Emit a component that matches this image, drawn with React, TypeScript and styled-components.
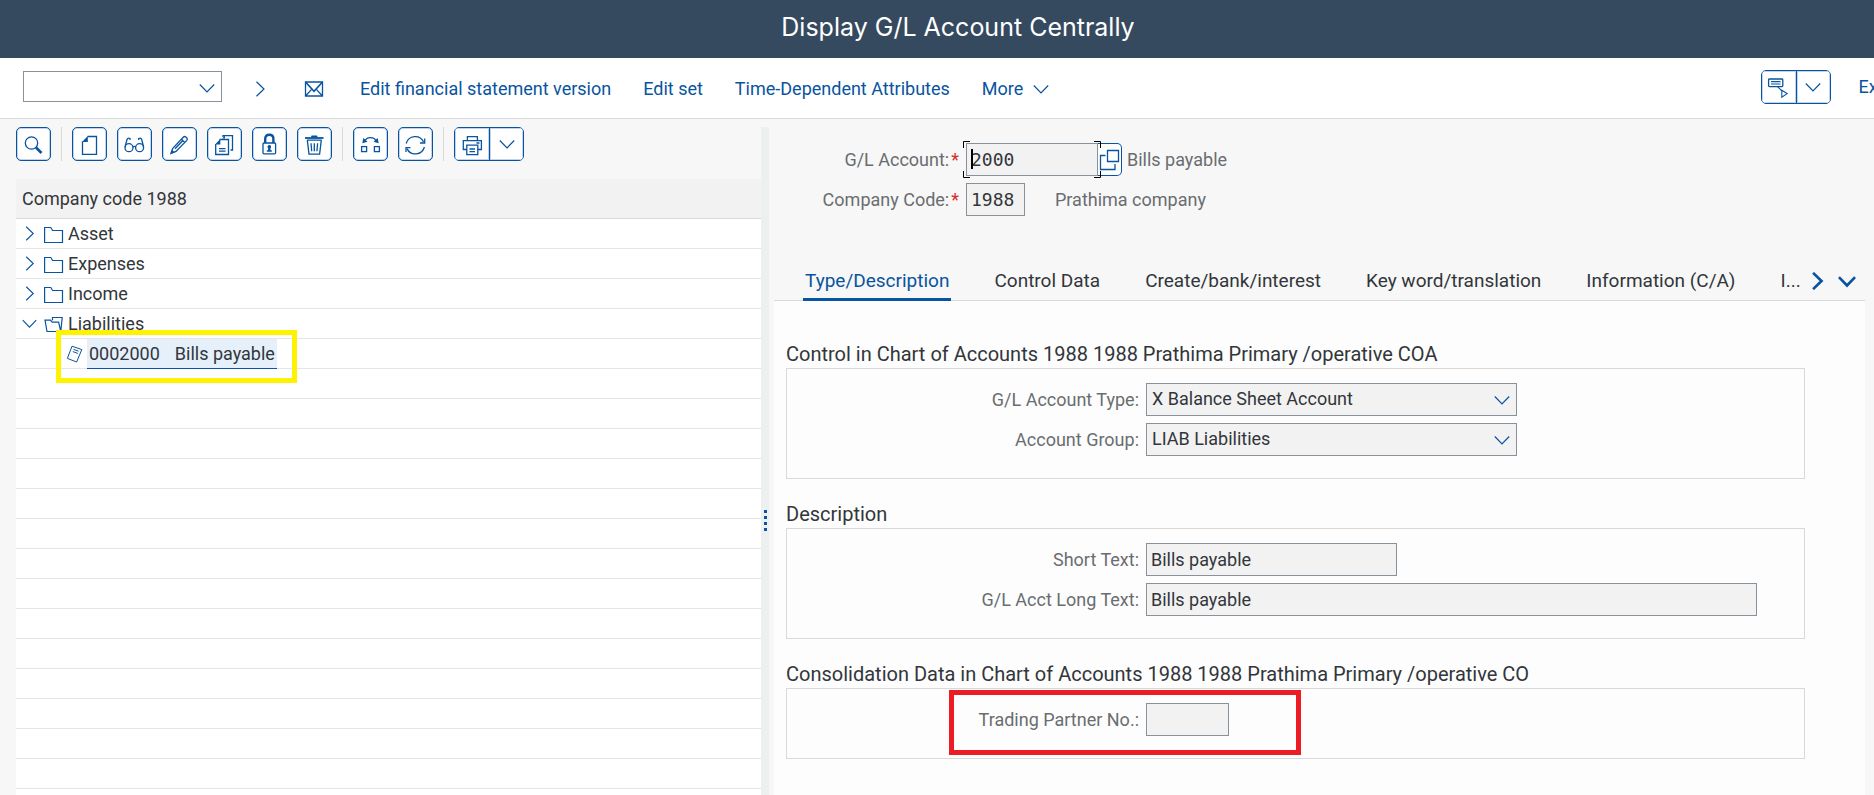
import React from 'react';
import styled, { createGlobalStyle } from 'styled-components';

const color = {
  shell: '#354a5f',
  page: '#f7f7f7',
  link: '#0854a0',
  text: '#32363a',
  label: '#6a6d70',
  line: '#d9d9d9',
  rowLine: '#e5e5e5',
  field: '#f2f2f2',
  fieldBorder: '#89919a',
};

const GlobalStyle = createGlobalStyle`
  *, *::before, *::after { box-sizing: border-box; }
  body {
    margin: 0;
    background: ${color.page};
    color: ${color.text};
    font: 18px/24px Roboto, "Liberation Sans", sans-serif;
  }
  button, input, select { font: inherit; color: inherit; margin: 0; }
  button { padding: 0; border: 0; background: none; cursor: pointer; }
  svg { display: block; flex: none; }
`;

/* ---------- page frame ---------- */

const Page = styled.div`
  display: flex;
  flex-direction: column;
  height: 100vh;
  overflow: hidden;
`;

const ShellHeader = styled.header`
  display: flex;
  justify-content: center;
  height: 58px;
  padding: 0 0 4px 42px;
  align-items: center;
  background: ${color.shell};
`;

const Title = styled.h1`
  margin: 0;
  color: #fff;
  font: 400 25px/32px Inter, "Liberation Sans", sans-serif;
`;

const ActionBar = styled.div`
  display: flex;
  align-items: center;
  height: 61px;
  padding: 0 0 3px 23px;
  overflow: hidden;
  background: #fff;
  border-bottom: 1px solid ${color.line};
`;

const Actions = styled.nav`
  display: flex;
  align-items: center;
  gap: 32px;
  padding-top: 4px;
  color: ${color.link};
`;

const IconActions = styled.div`
  display: flex;
  align-items: center;
  gap: 36px;
  margin: 0 36px 0 30px;
  padding-top: 4px;
`;

const ActionButton = styled.button`
  display: flex;
  align-items: center;
  gap: 10px;
  color: ${color.link};
  white-space: nowrap;
`;

const BarEnd = styled.div`
  display: flex;
  align-items: center;
  gap: 28px;
  margin: 0 -14px 0 auto;
`;

const Body = styled.main`
  display: flex;
  flex: 1;
  min-height: 0;
  padding-top: 8px;
`;

/* ---------- buttons ---------- */

const ToolGroup = styled.div`
  display: flex;
  height: 34px;
  background: #fff;
  border: 1px solid ${color.link};
  border-radius: 5px;
  overflow: hidden;
`;

const ToolButton = styled.button`
  display: flex;
  align-items: center;
  justify-content: center;
  width: 35px;
  height: 34px;
  color: ${color.link};
  background: #fff;
  border: 1px solid ${color.link};
  border-radius: 5px;
  box-shadow: inset 0 0 0 1px rgba(8, 84, 160, 0.25);

  ${ToolGroup} & {
    width: 34px;
    height: 32px;
    border: 0;
    border-radius: 0;
  }
  ${ToolGroup} & + & {
    border-left: 1px solid ${color.link};
  }
`;

/* ---------- tree ---------- */

const TreePane = styled.section`
  display: flex;
  flex-direction: column;
  flex: 0 1 745px;
  margin-left: 16px;
  min-width: 0;
`;

const TreeTools = styled.div`
  display: flex;
  gap: 10px;
  margin-bottom: 18px;
`;

const ToolDivider = styled.span`
  width: 1px;
  height: 34px;
  background: ${color.line};
`;

const TreeHeading = styled.h2`
  flex: none;
  margin: 0;
  height: 40px;
  padding-left: 6px;
  font-size: 18px;
  font-weight: 400;
  line-height: 39px;
  background: ${color.field};
  border-bottom: 1px solid ${color.line};
`;

const Tree = styled.ul`
  flex: 1;
  min-height: 0;
  margin: 0;
  padding: 0;
  list-style: none;
  background: #fff;
`;

const TreeRow = styled.li<{ $level?: number }>`
  position: relative;
  display: flex;
  align-items: center;
  height: 30px;
  padding-left: ${(p) => (p.$level ? 50 : 6)}px;
  color: ${color.link};
  border-bottom: 1px solid ${color.rowLine};
`;

const TreeToggle = styled.button`
  margin-right: 7px;
  color: ${color.link};
`;

const TreeLabel = styled.span`
  margin-left: 4px;
  color: ${color.text};
`;

const SelectedItem = styled.button`
  display: flex;
  align-items: center;
  align-self: flex-start;
  gap: 15px;
  height: 30px;
  margin-left: 3px;
  padding: 0 2px;
  color: ${color.text};
  background: #e5f0fa;
  border-bottom: 1px solid ${color.link};
`;

const YellowMark = styled.div`
  position: absolute;
  top: -9px;
  left: 40px;
  width: 241px;
  height: 53px;
  border: 5px solid #fff200;
  pointer-events: none;
`;

const Splitter = styled.div`
  display: flex;
  flex-direction: column;
  align-items: center;
  gap: 3px;
  flex: none;
  width: 8px;
  padding-top: 383px;
  background: #edeff1;
`;

const Grip = styled.i`
  width: 3px;
  height: 3px;
  background: ${color.link};
`;

/* ---------- detail pane ---------- */

const Detail = styled.section`
  display: flex;
  flex-direction: column;
  flex: 1;
  min-width: 0;
  padding: 16px 9px 0 5px;
`;

const KeyFields = styled.div`
  display: grid;
  gap: 7px;
  margin-bottom: 46px;
`;

const FormRow = styled.div<{ $labelWidth: number }>`
  display: grid;
  grid-template-columns: ${(p) => p.$labelWidth}px 1fr;
  align-items: center;
  column-gap: 7px;
  height: 33px;
`;

const Label = styled.label`
  color: ${color.label};
  text-align: right;
  white-space: nowrap;
`;

const Required = styled.span`
  margin-left: 2px;
  color: #d92b2b;
`;

const FieldGroup = styled.div`
  display: flex;
  align-items: center;
`;

const TextField = styled.input<{ $width: number; $mono?: boolean }>`
  width: ${(p) => p.$width}px;
  max-width: 100%;
  height: 33px;
  padding: 0 4px;
  background: ${color.field};
  border: 1px solid ${color.fieldBorder};
  border-radius: 0;
  outline: 0;
  ${(p) => p.$mono && 'font-family: "DejaVu Sans Mono", "Liberation Mono", monospace;'}
`;

const FocusFrame = styled.div`
  position: relative;
  height: 33px;
`;

const FocusCorners = styled.svg`
  position: absolute;
  z-index: 1;
  top: -2px;
  left: -3px;
  pointer-events: none;
`;

const ValueHelp = styled.button`
  height: 33px;
  width: 24px;
  color: ${color.link};
  background: #fff;
  border: 1px solid ${color.link};
  border-left: 0;
  border-radius: 0 5px 5px 0;
`;

const FieldNote = styled.span<{ $gap: number }>`
  margin-left: ${(p) => p.$gap}px;
  color: ${color.label};
`;

const SelectBox = styled.div<{ $width: number; $height: number }>`
  position: relative;
  width: ${(p) => p.$width}px;
  height: ${(p) => p.$height}px;
  color: ${color.link};

  svg {
    position: absolute;
    top: 9px;
    right: 7px;
    pointer-events: none;
  }
`;

const Select = styled.select<{ $plain?: boolean }>`
  appearance: none;
  width: 100%;
  height: 100%;
  padding: 0 28px 2px 5px;
  color: ${color.text};
  background: ${(p) => (p.$plain ? '#fff' : color.field)};
  border: 1px solid ${color.fieldBorder};
  border-radius: 0;
`;

const TabBar = styled.div`
  display: flex;
  height: 39px;
  flex: none;
  padding: 0 9px 0 29px;
  border-bottom: 1px solid ${color.line};
`;

const TabList = styled.div`
  display: flex;
  gap: 41px;
  flex: 1;
`;

const Tab = styled.button<{ $active?: boolean }>`
  height: 39px;
  padding: 0 2px;
  font-size: 19px;
  line-height: 38px;
  white-space: nowrap;
  color: ${(p) => (p.$active ? color.link : color.text)};
  border-bottom: 3px solid ${(p) => (p.$active ? color.link : 'transparent')};
`;

const TabNav = styled.div`
  display: flex;
  gap: 12px;
  color: ${color.link};
  height: 38px;
`;

const TabPanel = styled.div`
  flex: 1;
  min-height: 0;
  padding: 39px 60px 0 12px;
  background: #fdfdfd;
`;

const Section = styled.section`
  margin-bottom: 21px;
`;

const SectionTitle = styled.h3`
  margin: 0;
  font-size: 20px;
  font-weight: 400;
  line-height: 28px;
  white-space: nowrap;
`;

const SectionBox = styled.div`
  position: relative;
  display: grid;
  gap: 7px;
  padding: 14px 0 22px;
  border: 1px solid ${color.line};
`;

const RedMark = styled.div`
  position: absolute;
  top: 1px;
  left: 162px;
  width: 352px;
  height: 65px;
  border: 5px solid #ed1c24;
  pointer-events: none;
`;

/* ---------- icons ---------- */

type ArrowProps = { direction?: 'down' | 'right'; size?: number; weight?: number };

function Arrow({ direction = 'down', size = 16, weight = 1 }: ArrowProps) {
  const d = direction === 'down' ? 'M0.8 4.5 L8 12 L15.2 4.5' : 'M4.5 0.8 L12 8 L4.5 15.2';
  return (
    <svg width={size} height={size} viewBox="0 0 16 16" fill="none" stroke="currentColor" strokeWidth={weight * 1.2}>
      <path d={d} />
    </svg>
  );
}

function ToolIcon({ children }: { children: React.ReactNode }) {
  return (
    <svg width="33" height="32" viewBox="1 1 33 32" fill="none" stroke="currentColor" strokeWidth="1.3">
      {children}
    </svg>
  );
}

const icons = {
  search: (
    <ToolIcon>
      <circle cx="15.5" cy="16" r="6.2" />
      <path d="M20 20.5 L25.5 26" strokeWidth="2.6" />
    </ToolIcon>
  ),
  create: (
    <ToolIcon>
      <path d="M15.5 9.5 H24.5 V27.3 H10.5 V14.5" />
      <path d="M10 15 L15.8 9 V15 Z" fill="currentColor" stroke="none" />
    </ToolIcon>
  ),
  display: (
    <ToolIcon>
      <circle cx="12" cy="20.7" r="4" />
      <circle cx="22.6" cy="20.7" r="4" />
      <path d="M15.8 20 Q17.3 18.8 18.8 20 M8 20 L10 12.5 Q10.7 10.6 13 11.5 V13 M26.6 20 L24.7 12.5 Q24 10.6 21.7 11.5 V13" />
    </ToolIcon>
  ),
  edit: (
    <ToolIcon>
      <path d="M9 26.3 L10.8 21.3 L21.5 10 Q22.5 9 23.8 10 L25 11.2 Q25.8 12.3 24.8 13.4 L14 24.4 Z M19.5 12.2 L22.7 15.5 M13 21.8 L20.5 14" />
      <path d="M8.7 26.8 L10 22.7 L12.8 25.4 Z" fill="currentColor" stroke="none" />
    </ToolIcon>
  ),
  copy: (
    <ToolIcon>
      <path d="M12.5 12.5 H21.5 V27.5 H8.7 V17" />
      <path d="M8 17.5 L13.3 12 V17.5 Z" fill="currentColor" stroke="none" />
      <path d="M16 10 V8.6 H25.5 V23 H23.5 M12 21.6 H18.5 M12 24.2 H18.5" />
      <path d="M15.3 11.5 L18 8.5 V11.5 Z" fill="currentColor" stroke="none" />
    </ToolIcon>
  ),
  lock: (
    <ToolIcon>
      <path d="M13.2 16 V12 Q13.2 7.8 17.3 7.8 Q21.4 7.8 21.4 12 V16" strokeWidth="2.4" />
      <rect x="11" y="16" width="12.6" height="10.8" rx="1" />
      <path d="M17.3 18 a1.9 1.9 0 0 1 1.2 3.3 V23.3 H19.8 V24.8 H14.8 V23.3 H16.1 V21.3 A1.9 1.9 0 0 1 17.3 18 Z" fill="currentColor" stroke="none" />
    </ToolIcon>
  ),
  remove: (
    <ToolIcon>
      <path d="M8 11 H26.5" strokeWidth="1.8" />
      <path d="M13.8 10.5 L14.6 8.5 H20 L20.8 10.5 Z" fill="currentColor" stroke="none" />
      <path d="M10 13.2 H24.6 M10.3 13.2 L12 27.2 H22.6 L24.3 13.2 M14 16.3 L14.7 24.3 M17.3 16.3 V24.3 M20.6 16.3 L19.9 24.3" />
    </ToolIcon>
  ),
  swap: (
    <ToolIcon>
      <rect x="8.6" y="19.6" width="5" height="5" />
      <rect x="21.4" y="19.6" width="5" height="5" />
      <path d="M12 14 Q13 10.6 17.5 10.6 Q22 10.6 23 14" />
      <path d="M9.3 16.2 L10.3 10.9 L14.5 14.8 Z M25.7 16.2 L24.7 10.9 L20.5 14.8 Z" fill="currentColor" stroke="none" />
    </ToolIcon>
  ),
  refresh: (
    <ToolIcon>
      <path d="M8.2 16.5 A9.3 9.3 0 0 1 25.6 15 M26.4 20 A9.3 9.3 0 0 1 9 21.6" />
      <path d="M26.7 11.5 V16 H22 M8 25 V20.6 H12.5" />
    </ToolIcon>
  ),
  print: (
    <ToolIcon>
      <path d="M12.4 13.6 V9.6 H22.4 V13.6 M11.8 22.5 H8.3 V13.6 H26.4 V22.5 H22.8" />
      <path d="M11.8 18.2 H22.8 V27.6 H11.8 Z M14.5 22 H20 M14.5 24.6 H20 M21.5 16 H24.5" />
    </ToolIcon>
  ),
  guide: (
    <ToolIcon>
      <rect x="7.6" y="9" width="14.2" height="7.6" rx="0.8" />
      <path d="M10 11.6 H19.5 M10 14 H19.5 M16.5 16.6 L20.8 20.8 M20.8 20.2 L26.2 23.6 L20.8 27.3 Z" strokeWidth="1.1" />
    </ToolIcon>
  ),
};

function MailIcon() {
  return (
    <svg width="20" height="16" viewBox="0 0 20 16" fill="none" stroke="currentColor" strokeWidth="1.3">
      <path d="M1.5 1 H18.5 V15 H1.5 Z M1.5 15 L7.6 8.4 M18.5 15 L12.4 8.4" />
      <path d="M1.5 1 L10 10.4 L18.5 1" strokeWidth="1.6" />
    </svg>
  );
}

function FolderIcon({ open }: { open?: boolean }) {
  return (
    <svg width="20" height="18" viewBox="0 0 20 18" fill="none" stroke="currentColor" strokeWidth="1.2">
      {open ? (
        <path d="M8.5 5.2 V2.5 H18.2 L16.8 16.5 H3 L1 5.2 H6.5 L8.2 7.2 H14.6 L16.8 16.5" />
      ) : (
        <path d="M0.6 17.5 V2.5 H6.8 L8.6 5.5 H18.5 V17.5 Z" />
      )}
    </svg>
  );
}

function AccountIcon() {
  return (
    <svg width="18" height="18" viewBox="0 0 18 18" fill="none" stroke="currentColor" strokeWidth="1">
      <path d="M6 1.2 L15.8 4.6 L10.6 17 L1.4 13.4 Z M7.6 4.4 L12.6 6.2 M6.8 6.6 L11.8 8.4" />
    </svg>
  );
}

function CopyWindowsIcon() {
  return (
    <svg width="24" height="31" viewBox="0 0 24 31" fill="none" stroke="currentColor" strokeWidth="1.3">
      <path d="M9.5 6.5 H20.5 V17.5 H9.5 Z M7.5 11.5 H2.5 V25.5 H17 V20" />
    </svg>
  );
}

/* ---------- data ---------- */

const tools: [keyof typeof icons, string][][] = [
  [['search', 'Find']],
  [
    ['create', 'Create'],
    ['display', 'Display'],
    ['edit', 'Change'],
    ['copy', 'Create with template'],
    ['lock', 'Block'],
    ['remove', 'Mark for deletion'],
  ],
  [
    ['swap', 'Switch hierarchy'],
    ['refresh', 'Refresh'],
  ],
];

const folders = [
  { name: 'Asset' },
  { name: 'Expenses' },
  { name: 'Income' },
  { name: 'Liabilities', open: true },
];

const tabs = ['Type/Description', 'Control Data', 'Create/bank/interest', 'Key word/translation', 'Information (C/A)', 'I...'];

const blankRows = Array.from({ length: 15 }, (_, i) => i);

function SelectField({ id, value }: { id: string; value: string }) {
  return (
    <SelectBox $width={371} $height={33}>
      <Select id={id} defaultValue={value}>
        <option>{value}</option>
      </Select>
      <Arrow />
    </SelectBox>
  );
}

/* ---------- screen ---------- */

export default function App() {
  return (
    <Page>
      <GlobalStyle />
      <ShellHeader>
        <Title>Display G/L Account Centrally</Title>
      </ShellHeader>

      <ActionBar>
        <SelectBox $width={199} $height={31}>
          <Select $plain aria-label="Command" defaultValue="">
            <option value="" />
          </Select>
          <Arrow />
        </SelectBox>
        <IconActions>
          <ActionButton aria-label="Next"><Arrow direction="right" /></ActionButton>
          <ActionButton aria-label="Mail"><MailIcon /></ActionButton>
        </IconActions>
        <Actions>
          <ActionButton>Edit financial statement version</ActionButton>
          <ActionButton>Edit set</ActionButton>
          <ActionButton>Time-Dependent Attributes</ActionButton>
          <ActionButton>More <Arrow /></ActionButton>
        </Actions>
        <BarEnd>
          <ToolGroup>
            <ToolButton aria-label="Guided tour">{icons.guide}</ToolButton>
            <ToolButton aria-label="Tour options"><Arrow /></ToolButton>
          </ToolGroup>
          <ActionButton>Exit</ActionButton>
        </BarEnd>
      </ActionBar>

      <Body>
        <TreePane>
          <TreeTools>
            {tools.map((group, i) => (
              <React.Fragment key={i}>
                {group.map(([icon, name]) => (
                  <ToolButton key={icon} aria-label={name}>{icons[icon]}</ToolButton>
                ))}
                <ToolDivider />
              </React.Fragment>
            ))}
            <ToolGroup>
              <ToolButton aria-label="Print">{icons.print}</ToolButton>
              <ToolButton aria-label="Print options"><Arrow /></ToolButton>
            </ToolGroup>
          </TreeTools>
          <TreeHeading>Company code 1988</TreeHeading>
          <Tree>
            {folders.map(({ name, open }) => (
              <TreeRow key={name}>
                <TreeToggle aria-label={name} aria-expanded={!!open}>
                  <Arrow size={15} direction={open ? 'down' : 'right'} />
                </TreeToggle>
                <FolderIcon open={open} />
                <TreeLabel>{name}</TreeLabel>
              </TreeRow>
            ))}
            <TreeRow $level={1}>
              <AccountIcon />
              <SelectedItem>
                <span>0002000</span>
                <span>Bills payable</span>
              </SelectedItem>
              <YellowMark />
            </TreeRow>
            {blankRows.map((n) => (
              <TreeRow key={n} aria-hidden="true" />
            ))}
          </Tree>
        </TreePane>

        <Splitter>
          <Grip /><Grip /><Grip /><Grip />
        </Splitter>

        <Detail>
          <KeyFields>
            <FormRow $labelWidth={185}>
              <Label htmlFor="account">G/L Account:<Required>*</Required></Label>
              <FieldGroup>
                <FocusFrame>
                  <TextField id="account" $width={132} $mono readOnly value="2000" />
                  <FocusCorners width="138" height="37" fill="none" stroke="#000">
                    <path d="M0.5 7 V0.5 H7 M131 0.5 H137.5 V7 M137.5 30 V36.5 H131 M7 36.5 H0.5 V30" />
                    <path d="M9 8 V28" strokeWidth="2" />
                  </FocusCorners>
                </FocusFrame>
                <ValueHelp aria-label="Choose account"><CopyWindowsIcon /></ValueHelp>
                <FieldNote $gap={5}>Bills payable</FieldNote>
              </FieldGroup>
            </FormRow>
            <FormRow $labelWidth={185}>
              <Label htmlFor="company">Company Code:<Required>*</Required></Label>
              <FieldGroup>
                <TextField id="company" $width={59} $mono readOnly value="1988" />
                <FieldNote $gap={30}>Prathima company</FieldNote>
              </FieldGroup>
            </FormRow>
          </KeyFields>

          <TabBar>
            <TabList role="tablist">
              {tabs.map((tab, i) => (
                <Tab key={tab} role="tab" aria-selected={i === 0} $active={i === 0}>{tab}</Tab>
              ))}
            </TabList>
            <TabNav>
              <ActionButton aria-label="Next tabs"><Arrow direction="right" size={18} weight={2} /></ActionButton>
              <ActionButton aria-label="All tabs"><Arrow size={18} weight={2} /></ActionButton>
            </TabNav>
          </TabBar>

          <TabPanel role="tabpanel">
            <Section>
              <SectionTitle>Control in Chart of Accounts 1988 1988 Prathima Primary /operative COA</SectionTitle>
              <SectionBox>
                <FormRow $labelWidth={352}>
                  <Label htmlFor="type">G/L Account Type:</Label>
                  <SelectField id="type" value="X Balance Sheet Account" />
                </FormRow>
                <FormRow $labelWidth={352}>
                  <Label htmlFor="group">Account Group:</Label>
                  <SelectField id="group" value="LIAB Liabilities" />
                </FormRow>
              </SectionBox>
            </Section>
            <Section>
              <SectionTitle>Description</SectionTitle>
              <SectionBox>
                <FormRow $labelWidth={352}>
                  <Label htmlFor="short">Short Text:</Label>
                  <TextField id="short" $width={251} readOnly value="Bills payable" />
                </FormRow>
                <FormRow $labelWidth={352}>
                  <Label htmlFor="long">G/L Acct Long Text:</Label>
                  <TextField id="long" $width={611} readOnly value="Bills payable" />
                </FormRow>
              </SectionBox>
            </Section>
            <Section>
              <SectionTitle>Consolidation Data in Chart of Accounts 1988 1988 Prathima Primary /operative CO</SectionTitle>
              <SectionBox>
                <FormRow $labelWidth={352}>
                  <Label htmlFor="partner">Trading Partner No.:</Label>
                  <TextField id="partner" $width={83} readOnly value="" />
                </FormRow>
                <RedMark />
              </SectionBox>
            </Section>
          </TabPanel>
        </Detail>
      </Body>
    </Page>
  );
}
